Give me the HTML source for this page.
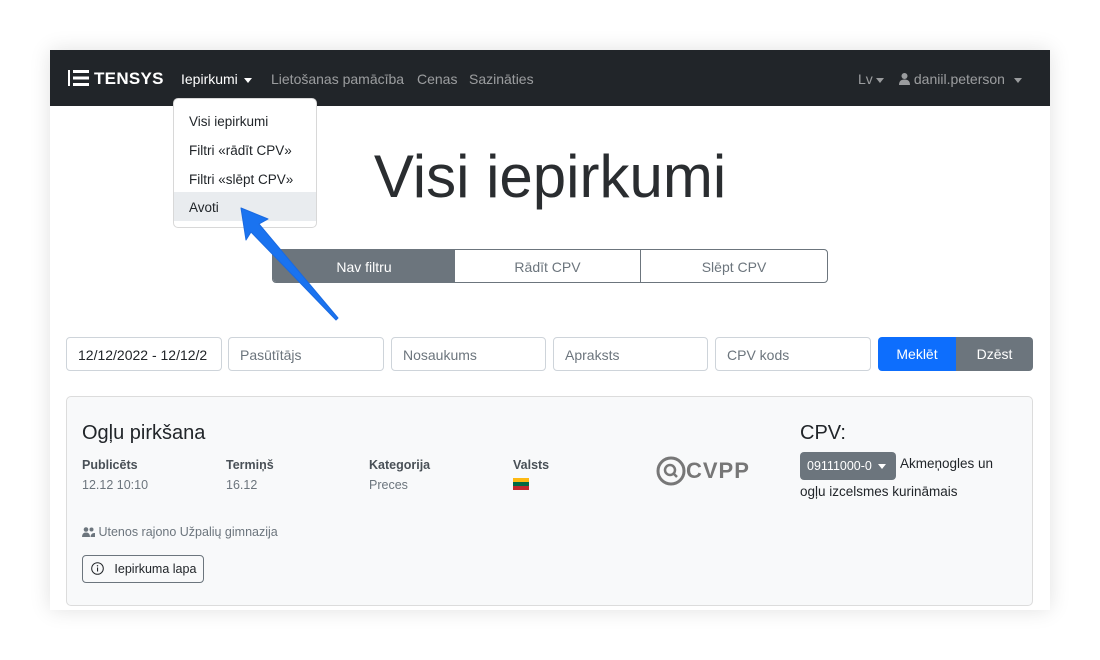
<!DOCTYPE html>
<html><head><meta charset="utf-8"><style>
*{box-sizing:border-box;margin:0;padding:0}
body{width:1100px;height:660px;background:#fff;font-family:"Liberation Sans","DejaVu Sans",sans-serif;position:relative;overflow:hidden}
.frame{position:absolute;left:50px;top:50px;width:1000px;height:560px;background:#fff;box-shadow:0 0 20px rgba(0,0,0,.12);overflow:hidden}
.nav{position:absolute;left:0;top:0;width:1000px;height:56px;background:#212529;color:rgba(255,255,255,.55);font-size:14px}
.nav span{position:absolute;top:21px}
.abs{position:absolute}
.dd{position:absolute;left:123px;top:48px;width:144px;height:130px;background:#fff;border:1px solid #d8d8d8;border-radius:5px;font-size:13.5px;color:#212529}
.dd div{position:absolute;left:0;width:142px;height:29px;padding:8px 0 0 15px}
.caret{display:inline-block;border-left:4px solid transparent;border-right:4px solid transparent;border-top:5px solid currentColor;vertical-align:middle;margin-left:6px}
.inp{position:absolute;top:287px;height:34px;border:1px solid #ced4da;border-radius:4px;font-size:14px;color:#6c757d;padding:9px 11px;background:#fff}
.card{position:absolute;left:16px;top:346px;width:967px;height:210px;background:#f8f9fa;border:1px solid #dcdcdc;border-radius:5px}
.lbl{position:absolute;font-size:12.5px;font-weight:bold;color:#495057}
.val{position:absolute;font-size:12.5px;color:#6c757d}
</style></head><body>
<div class="frame">
<div class="nav">
 <svg class="abs" style="left:18px;top:19px" width="22" height="18" viewBox="0 0 22 18"><rect x="0" y="1" width="2" height="16" fill="#fff"/><rect x="5" y="1" width="16" height="3" fill="#fff"/><rect x="5" y="7.5" width="16" height="3" fill="#fff"/><rect x="5" y="14" width="16" height="3" fill="#fff"/></svg>
 <span style="left:44px;top:19px;color:#fff;font-size:17px;font-weight:bold;letter-spacing:.3px">TENSYS</span>
 <span style="left:131px;color:#fff">Iepirkumi<i class="caret"></i></span>
 <span style="left:221px">Lietošanas pamācība</span>
 <span style="left:367px">Cenas</span>
 <span style="left:419px">Sazināties</span>
 <span style="left:808px">Lv<i class="caret" style="margin-left:3px"></i></span>
 <span style="left:849px">
  <svg width="11" height="12" viewBox="0 0 11 12" style="vertical-align:-1px"><circle cx="5.5" cy="3" r="3" fill="currentColor"/><path d="M0 12 Q0 6.5 5.5 6.5 Q11 6.5 11 12Z" fill="currentColor"/></svg> daniil.peterson<i class="caret" style="margin-left:9px"></i></span>
</div>
<div class="abs" style="left:0;top:92px;width:1000px;text-align:center;font-size:60px;font-weight:normal;color:#2a2d30;padding-left:0">Visi iepirkumi</div>
<div class="abs" style="left:222px;top:199px;width:556px;height:34px;border:1px solid #6c757d;border-radius:4px;font-size:14px;color:#6c757d;overflow:hidden">
 <div class="abs" style="left:0;top:0;width:182px;height:34px;background:#6c757d;color:#fff;text-align:center;padding-top:9px">Nav filtru</div>
 <div class="abs" style="left:182px;top:0;width:186px;height:34px;border-right:1px solid #6c757d;text-align:center;padding-top:9px">Rādīt CPV</div>
 <div class="abs" style="left:368px;top:0;width:186px;height:34px;text-align:center;padding-top:9px">Slēpt CPV</div>
</div>
<div class="inp" style="left:16px;width:156px;color:#212529;overflow:hidden;white-space:nowrap">12/12/2022 - 12/12/2</div>
<div class="inp" style="left:178px;width:156px">Pasūtītājs</div>
<div class="inp" style="left:341px;width:155px">Nosaukums</div>
<div class="inp" style="left:503px;width:155px">Apraksts</div>
<div class="inp" style="left:665px;width:156px">CPV kods</div>
<div class="abs" style="left:828px;top:287px;width:78px;height:34px;background:#0d6efd;color:#fff;font-size:14px;text-align:center;padding-top:9px;border-radius:4px 0 0 4px">Meklēt</div>
<div class="abs" style="left:906px;top:287px;width:77px;height:34px;background:#6c757d;color:#fff;font-size:14px;text-align:center;padding-top:9px;border-radius:0 4px 4px 0">Dzēst</div>
<div class="card">
 <div class="abs" style="left:15px;top:25px;font-size:20px;color:#212529">Ogļu pirkšana</div>
 <div class="lbl" style="left:15px;top:61px">Publicēts</div><div class="val" style="left:15px;top:81px">12.12 10:10</div>
 <div class="lbl" style="left:159px;top:61px">Termiņš</div><div class="val" style="left:159px;top:81px">16.12</div>
 <div class="lbl" style="left:302px;top:61px">Kategorija</div><div class="val" style="left:302px;top:81px">Preces</div>
 <div class="lbl" style="left:446px;top:61px">Valsts</div>
 <div class="abs" style="left:446px;top:81px;width:16px;height:12px"><div style="height:4px;background:#fdb913"></div><div style="height:4px;background:#006a44"></div><div style="height:4px;background:#c1272d"></div></div>
 <div class="abs" style="left:589px;top:59px;font-size:22px;font-weight:bold;color:#777;letter-spacing:1px"><svg width="30" height="30" viewBox="0 0 30 30" style="vertical-align:-8px"><circle cx="15" cy="15" r="13" fill="none" stroke="#777" stroke-width="3"/><circle cx="14" cy="14" r="5" fill="none" stroke="#777" stroke-width="2.5"/><path d="M17.5 17.5L21 21" stroke="#777" stroke-width="2.5"/></svg>CVPP</div>
 <div class="abs" style="left:733px;top:25px;font-size:20px;color:#212529">CPV:</div>
 <div class="abs" style="left:733px;top:55px;width:96px;height:28px;background:#6c757d;color:#fff;border-radius:4px;font-size:12.5px;padding:7px 0 0 7px">09111000-0<i class="caret"></i></div>
 <div class="abs" style="left:833px;top:59px;font-size:13.5px;color:#212529">Akmeņogles un</div>
 <div class="abs" style="left:733px;top:87px;font-size:13.5px;color:#212529">ogļu izcelsmes kurināmais</div>
 <div class="val" style="left:15px;top:128px"><svg width="13" height="10" viewBox="0 0 13 10" style="vertical-align:-1px"><circle cx="4" cy="2.5" r="2.3" fill="#6c757d"/><circle cx="9.5" cy="2.5" r="2" fill="#6c757d"/><path d="M0 10Q0 5.5 4 5.5Q8 5.5 8 10Z M8.5 10 Q9 5.5 13 6 L13 10Z" fill="#6c757d"/></svg> Utenos rajono Užpalių gimnazija</div>
 <div class="abs" style="left:15px;top:158px;width:122px;height:28px;border:1px solid #6c757d;border-radius:4px;font-size:12.5px;color:#212529;padding:6px 0 0 8px"><svg width="13" height="13" viewBox="0 0 13 13" style="vertical-align:-2px"><circle cx="6.5" cy="6.5" r="5.8" fill="none" stroke="#212529" stroke-width="1"/><rect x="6" y="5.5" width="1.1" height="4" fill="#212529"/><circle cx="6.5" cy="3.8" r=".7" fill="#212529"/></svg>&nbsp;&nbsp; Iepirkuma lapa</div>
</div>
<div class="dd">
 <div style="top:7px">Visi iepirkumi</div>
 <div style="top:36px">Filtri «rādīt CPV»</div>
 <div style="top:65px">Filtri «slēpt CPV»</div>
 <div style="top:93px;background:#e9ecef">Avoti</div>
</div>
</div>
<svg class="abs" style="left:0;top:0" width="1100" height="660"><path d="M241 208 L268 219 L259 224 L338 318 L336 320 L251 232 L246 240 Z" fill="#1a73f0" stroke="#1a6ae0" stroke-width="1" stroke-linejoin="round"/></svg>
</body></html>
